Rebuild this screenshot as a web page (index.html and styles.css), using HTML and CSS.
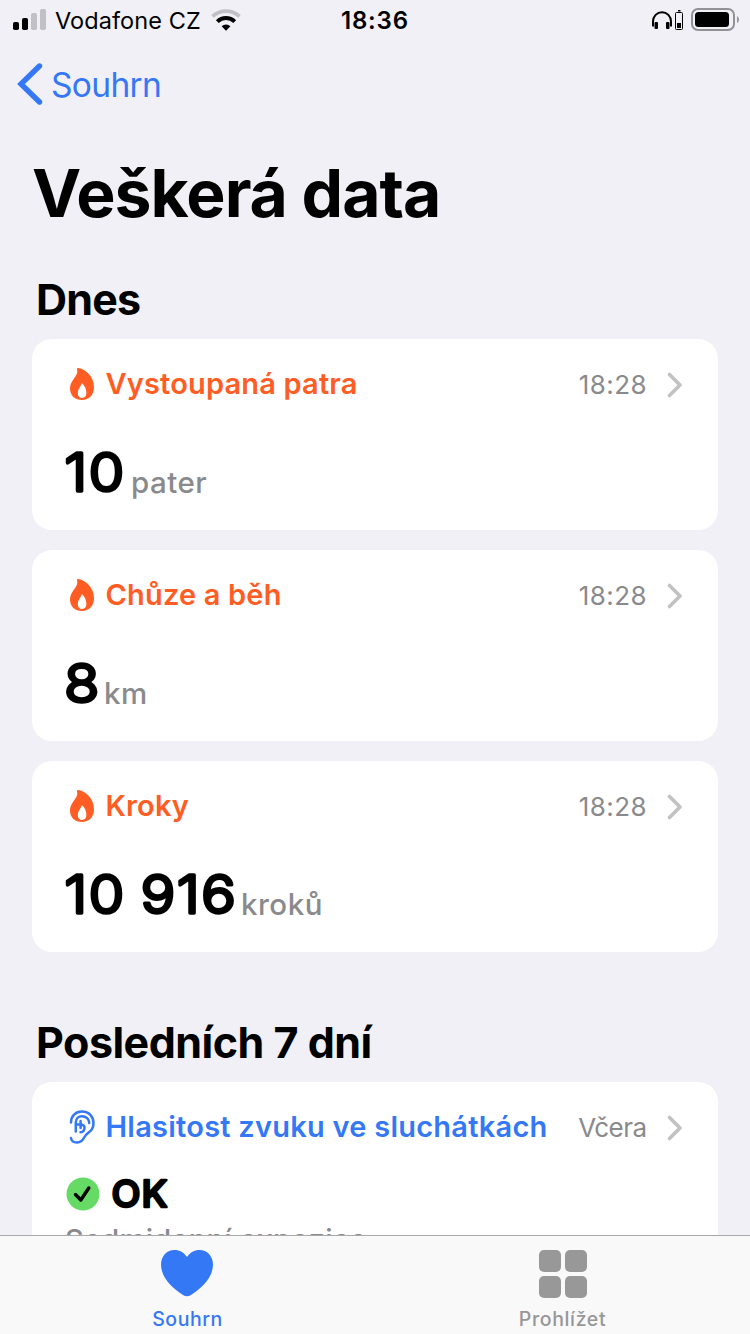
FILE: index.html
```html
<!DOCTYPE html>
<html lang="cs">
<head>
<meta charset="utf-8">
<title>Veškerá data</title>
<link rel="stylesheet" href="styles.css">
</head>
<body>
<svg width="0" height="0" class="defs">
  <symbol id="flame" viewBox="0 0 24 32"><path fill-rule="evenodd" d="M8 .1C15 .8 24 8 24 19.500C24 27 19 32 12 32C5 32 0 27.500 0 20.500C0 13.500 6 9.500 7.200 4.800C7.500 3.200 7 2 7 1C7 .4 7.400 0 8 .1ZM11.800 15C11.500 18 7.800 20.500 7.800 25C7.800 28.200 9.500 30 12.200 30C14.900 30 16.400 28 16.400 24.800C16.400 21 14.500 17.200 11.800 15Z"/></symbol>
  <symbol id="chevron" viewBox="0 0 16 26"><path d="M2.500 2.500L13 13L2.500 23.500" fill="none" stroke="currentColor" stroke-width="3.600" stroke-linecap="round" stroke-linejoin="round"/></symbol>
</svg>
<div class="screen">
  <header class="status">
    <svg class="signal" width="34" height="22" viewBox="0 0 34 22"><rect x="0" y="13" width="6" height="8" rx="1.800"/><rect x="9" y="9" width="6" height="12" rx="1.800"/><g fill="#c1c0c6"><rect x="18" y="4" width="6" height="17" rx="1.800"/><rect x="27" y="0" width="6" height="21" rx="1.800"/></g></svg>
    <span class="carrier">Vodafone CZ</span>
    <svg class="wifi" width="30" height="22" viewBox="0 0 30 22"><g fill="none"><path d="M1.500 7.300A20 20 0 0 1 28.500 7.300" stroke="#c1c0c6" stroke-width="3.800"/><path d="M6.300 12.600A12.500 12.500 0 0 1 23.700 12.600" stroke="#000" stroke-width="4"/></g><path d="M10.600 17.300A6.500 6.500 0 0 1 19.400 17.300L15 21.800Z"/></svg>
    <span class="clock">18:36</span>
    <svg class="power" width="90" height="26" viewBox="0 0 90 26"><g fill="none" stroke="#000"><path d="M3 18.500V13.500A9 9.300 0 0 1 21 13.500V18.500" stroke-width="2"/><rect x="25.500" y="4.500" width="7" height="17" rx="1" stroke-width="1"/></g><rect x="4.500" y="14" width="3.500" height="7" rx="1"/><rect x="16" y="14" width="3.500" height="7" rx="1"/><rect x="28" y="2" width="2.500" height="1.500"/><rect x="27" y="15" width="4" height="5"/><rect x="42" y="1" width="42" height="21" rx="6" fill="none" stroke="#929196" stroke-width="2"/><rect x="45" y="4" width="34" height="15" rx="3.500"/><path d="M87 8Q89 9 89 11.500T87 15Z" fill="#929196"/></svg>
  </header>
  <nav class="nav">
    <svg width="26" height="42" viewBox="0 0 26 42"><path d="M22.500 3L4 21L22.500 39" fill="none" stroke="#3478f6" stroke-width="5.400" stroke-linecap="round" stroke-linejoin="miter"/></svg>
    <span class="back">Souhrn</span>
  </nav>
  <h1 class="title">Veškerá data</h1>
  <h2 class="heading today">Dnes</h2>
  <main class="cards">
    <section class="card">
      <div class="row"><svg class="icon"><use href="#flame"/></svg><span class="name">Vystoupaná patra</span><span class="time">18:28</span><svg class="chev"><use href="#chevron"/></svg></div>
      <div class="reading"><svg class="num" width="66" height="60"><text x="-.5" y="49">10</text></svg><span class="unit">pater</span></div>
    </section>
    <section class="card">
      <div class="row"><svg class="icon"><use href="#flame"/></svg><span class="name">Chůze a běh</span><span class="time">18:28</span><svg class="chev"><use href="#chevron"/></svg></div>
      <div class="reading"><svg class="num" width="39" height="60"><text x="-.8" y="49">8</text></svg><span class="unit">km</span></div>
    </section>
    <section class="card">
      <div class="row"><svg class="icon"><use href="#flame"/></svg><span class="name">Kroky</span><span class="time">18:28</span><svg class="chev"><use href="#chevron"/></svg></div>
      <div class="reading"><svg class="num" width="176" height="60"><text x="-.5" y="49">10 916</text></svg><span class="unit">kroků</span></div>
    </section>
  </main>
  <h2 class="heading week">Posledních 7 dní</h2>
  <section class="card hearing">
    <div class="row"><svg class="icon ear" viewBox="0 0 26 34"><g fill="none" stroke="currentColor" stroke-width="2.500" stroke-linecap="round"><path d="M2 12.500C2 6 6.500 1.500 13 1.500C20 1.500 24.500 6.500 24.500 13C24.500 22 18.500 21.500 15.500 27C13.500 31 11.500 32.500 8 32.500C4.500 32.500 2.300 31 2 28"/><path d="M6.800 21.500V12.500C6.800 8.500 9.500 6.300 13 6.300C17 6.300 20.200 9 20.200 13"/><path d="M7 14.500H11C14 14.500 15.500 15.500 15.500 17.800C15.500 20 14 22 11.500 22.300M11.600 18V11"/></g></svg><span class="name long">Hlasitost zvuku ve sluchátkách</span><span class="time yesterday">Včera</span><svg class="chev"><use href="#chevron"/></svg></div>
    <div class="result"><svg width="34" height="34" viewBox="0 0 34 34"><circle cx="17" cy="17" r="16.500" fill="#65db65"/><path d="M9.500 17.500L14.800 23L22.800 11" fill="none" stroke="#000" stroke-width="3.400" stroke-linecap="round" stroke-linejoin="round"/></svg><svg class="num" width="66" height="44"><text class="ok" x="-.5" y="34.200">OK</text></svg></div>
    <p class="exposure">Sedmidenní expozice</p>
  </section>
  <footer class="tabs">
    <div class="tab active"><svg class="heart" width="52" height="48" viewBox="0 0 52 48"><path fill="#3478f6" d="M26 7C23 2.500 18.500 0 13.500 0C6 0 0 6 0 14.500C0 28 12 38.500 22 45Q26 47.500 30 45C40 38.500 52 28 52 14.500C52 6 46 0 38.500 0C33.500 0 29 2.500 26 7Z"/></svg><span class="summary">Souhrn</span></div>
    <div class="tab"><svg width="48" height="48" viewBox="0 0 48 48" fill="#989898"><rect width="22" height="22" rx="5"/><rect x="26" width="22" height="22" rx="5"/><rect y="26" width="22" height="22" rx="5"/><rect x="26" y="26" width="22" height="22" rx="5"/></svg><span class="browse">Prohlížet</span></div>
  </footer>
</div>
</body>
</html>
```
FILE: styles.css
```css
* { box-sizing: border-box; margin: 0; padding: 0; }
body { width: 750px; height: 1334px; overflow: hidden; background: #f1f0f6; font-family: Inter, "Liberation Sans", sans-serif; color: #000; }
.defs { display: none; }
svg { flex: none; }
.screen { width: 750px; height: 1334px; overflow: hidden; position: relative; }
span, h1, h2, p { white-space: nowrap; }

.status { height: 40px; display: flex; align-items: flex-start; padding: 9px 0 0 13px; }
.carrier { font-size: 23.5px; line-height: 24px; margin-left: 8px; width: 148px; letter-spacing: .08px; }
.wifi { margin-left: 7.5px; }
.clock { font-size: 24px; line-height: 24px; font-weight: 600; margin-left: 100.5px; width: 70px; letter-spacing: .8px; }
.power { margin: -1px 0 0 239px; }

.nav { height: 88px; display: flex; align-items: center; padding-left: 17px; color: #3478f6; }
.back { font-size: 33.5px; line-height: 40px; margin-left: 8px; letter-spacing: -.65px; padding-top: 1px; }

.title { font-size: 66px; line-height: 80px; font-weight: 700; margin: 25px 0 0 32px; letter-spacing: -1px; }
.heading { font-size: 43px; line-height: 50px; font-weight: 700; margin-left: 36px; }
.today { margin-top: 41px; letter-spacing: -.8px; }
.week { margin-top: 65px; letter-spacing: -.5px; }

.cards { margin: 15px 32px 0; display: grid; gap: 20px; }
.card { height: 191px; background: #fff; border-radius: 20px; padding: 25px 35px 0 33px; }
.row { height: 40px; display: flex; align-items: center; color: #ff5d23; }
.icon { width: 24px; height: 32px; margin-left: 5px; fill: #ff5d23; }
.name { font-size: 29px; line-height: 40px; font-weight: 600; margin-left: 11.5px; letter-spacing: .17px; }
.long { letter-spacing: .24px; }
.time { margin-left: auto; font-size: 26px; line-height: 40px; color: #8a8a8d; padding-top: 2px; letter-spacing: .45px; }
.yesterday { letter-spacing: -.55px; margin-right: .5px; }
.chev { width: 16px; height: 26px; margin: 2px 0 0 20px; color: #c2c2c4; }

.reading { display: flex; height: 60px; margin-top: 38px; align-items: flex-end; }
.num { overflow: visible; }
.num text { font-size: 52px; font-weight: 300; stroke: #000; stroke-width: 3.4px; stroke-linejoin: round; letter-spacing: 1.7px; word-spacing: -3px; transform: scale(1.1, 1); }
.unit { font-size: 29.5px; line-height: 40px; font-weight: 500; color: #8a8a8d; letter-spacing: .5px; }

.hearing { margin: 15px 32px 0; height: 260px; }
.hearing .row { color: #3478f6; }
.ear { width: 26px; height: 34px; margin-left: 4px; margin-right: -1px; margin-top: -1px; fill: none; }
.result { display: flex; align-items: center; height: 44px; margin-top: 25px; padding-left: 1px; gap: 12px; }
.num .ok { font-size: 36px; font-weight: 500; stroke-width: 2.4px; letter-spacing: 1px; transform: scale(1.05, 1.02); }
.exposure { font-size: 29px; line-height: 40px; font-weight: 500; color: #8a8a8d; margin-top: 4px; letter-spacing: .3px; }

.tabs { position: absolute; left: 0; right: 0; bottom: 0; height: 99px; background: #f9f9f9; border-top: 1px solid #a9a9ab; display: flex; }
.tab { width: 50%; display: flex; flex-direction: column; align-items: center; padding-top: 14px; color: #979797; font-size: 19.5px; line-height: 24px; font-weight: 500; gap: 9px; }
.active { color: #3478f6; }
.heart { margin-right: 1px; }
.summary { letter-spacing: .55px; }
.browse { letter-spacing: .65px; }
```
